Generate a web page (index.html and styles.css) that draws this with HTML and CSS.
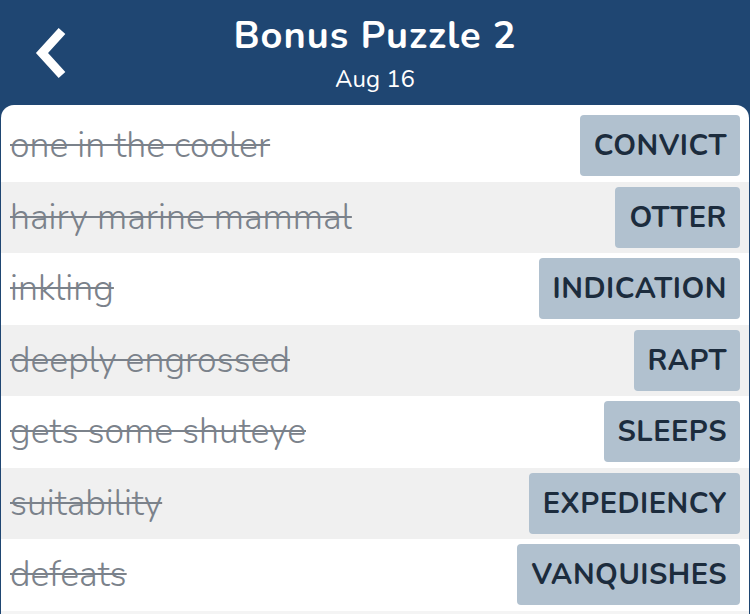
FILE: index.html
```html
<!DOCTYPE html>
<html>
<head>
<meta charset="utf-8">
<link rel="stylesheet" href="styles.css">
</head>
<body>
<div class="app">
  <header class="header">
    <svg class="back" width="80" height="100" viewBox="0 0 80 100"><path d="M62 31 L42 53 L62 75" fill="none" stroke="#fff" stroke-width="9" stroke-linejoin="miter"/></svg>
    <div class="titles">
      <div class="title">Bonus Puzzle 2</div>
      <div class="date">Aug 16</div>
    </div>
  </header>
  <main class="card">
    <div class="row"><span class="clue">one in the cooler</span><span class="answer">CONVICT</span></div>
    <div class="row alt"><span class="clue">hairy marine mammal</span><span class="answer">OTTER</span></div>
    <div class="row"><span class="clue">inkling</span><span class="answer">INDICATION</span></div>
    <div class="row alt"><span class="clue">deeply engrossed</span><span class="answer">RAPT</span></div>
    <div class="row"><span class="clue">gets some shuteye</span><span class="answer">SLEEPS</span></div>
    <div class="row alt"><span class="clue">suitability</span><span class="answer">EXPEDIENCY</span></div>
    <div class="row"><span class="clue">defeats</span><span class="answer">VANQUISHES</span></div>
    <div class="filler"></div>
  </main>
</div>
</body>
</html>
```

FILE: styles.css
```css
* { box-sizing: border-box; }
html, body { margin: 0; padding: 0; }
body {
  width: 750px;
  height: 614px;
  overflow: hidden;
  background: #1f4672;
  font-family: "Nunito", "Lato", "Noto Sans", sans-serif;
}
.app { display: flex; flex-direction: column; height: 614px; }
.header {
  height: 105px;
  flex: none;
  position: relative;
  display: flex;
  justify-content: center;
  color: #fff;
}
.back {
  position: absolute;
  left: 0;
  top: 0;
}
.titles {
  display: flex;
  flex-direction: column;
  align-items: center;
  padding-top: 14px;
}
.title {
  font-size: 38px;
  font-weight: 700;
  line-height: 44px;
  letter-spacing: 1px;
}
.date {
  font-size: 24px;
  line-height: 28px;
  margin-top: 7px;
}
.card {
  flex: 1;
  margin: 0 1px;
  background: #fff;
  border-radius: 13px 13px 0 0;
  padding-top: 5px;
  overflow: hidden;
}
.row {
  height: 71.5px;
  display: flex;
  align-items: center;
  justify-content: space-between;
  padding: 0 9px 0 9px;
}
.row:nth-child(even) { background: #f0f0f0; }
.filler { height: 10px; background: #f4f4f4; }
.clue {
  font-size: 35.7px;
  font-weight: 300;
  color: #7b828b;
  text-decoration: line-through;
  text-decoration-thickness: 2px;
}
.answer {
  height: 61px;
  display: flex;
  align-items: center;
  padding: 0 13px 0 14px;
  background: #b1c1cf;
  border-radius: 4px;
  color: #1c2c3d;
  font-weight: 700;
  font-size: 29px;
  letter-spacing: 0.5px;
}
```
